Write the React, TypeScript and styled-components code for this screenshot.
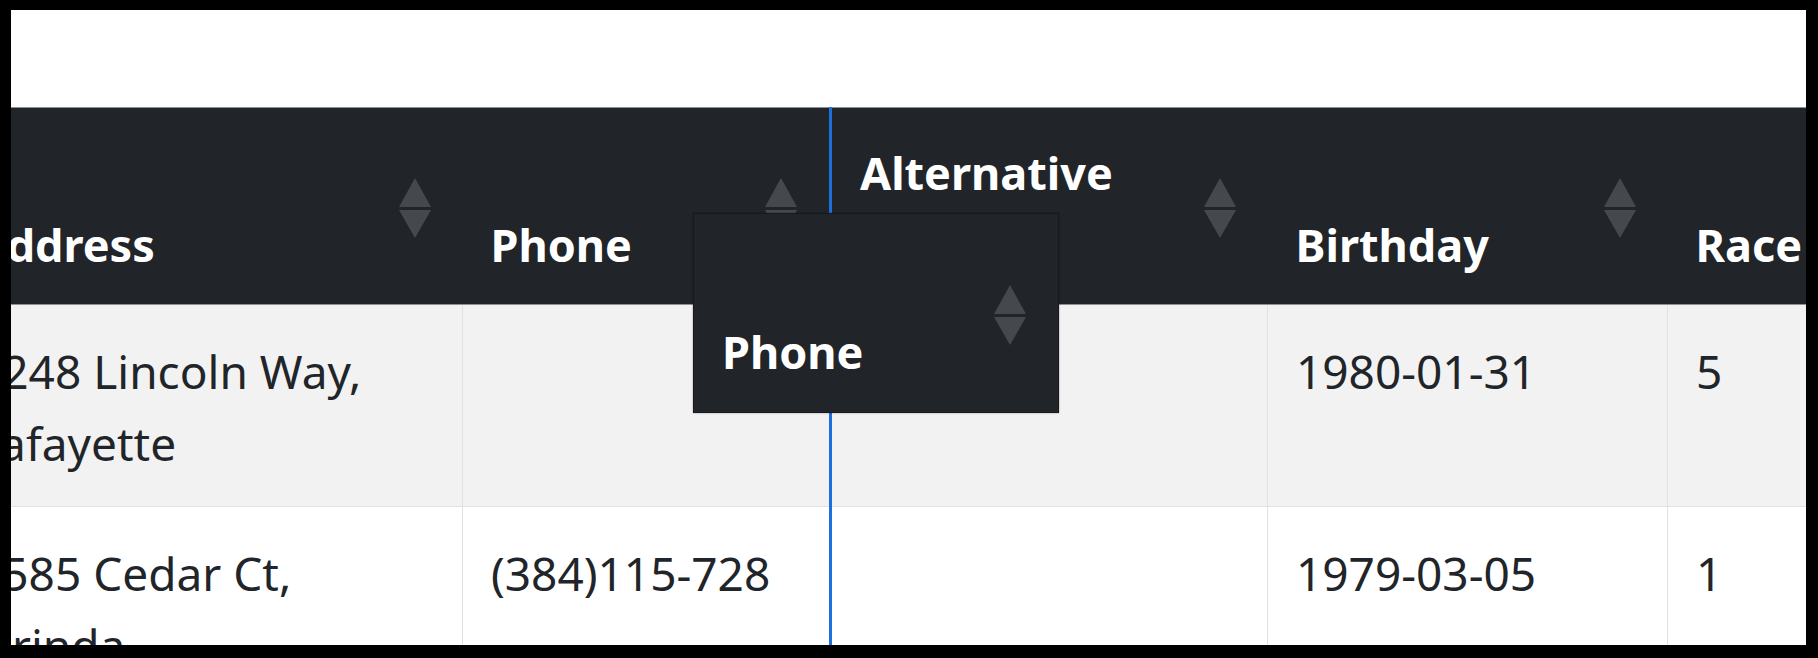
import { useLayoutEffect, useRef, FC } from 'react'
import styled, { createGlobalStyle } from 'styled-components'

interface Person {
  address: string
  phone: string
  altPhone: string
  birthday: string
  race: string
}

const people: Person[] = [
  {
    address: '1248 Lincoln Way, Lafayette',
    phone: '',
    altPhone: '',
    birthday: '1980-01-31',
    race: '5',
  },
  {
    address: '2585 Cedar Ct, Orinda',
    phone: '(384)115-728',
    altPhone: '',
    birthday: '1979-03-05',
    race: '1',
  },
]

const columns = [
  { key: 'address', title: 'Address', width: 515 },
  { key: 'phone', title: 'Phone', width: 368 },
  { key: 'altPhone', title: 'Alternative Phone', width: 437 },
  { key: 'birthday', title: 'Birthday', width: 400 },
  { key: 'race', title: 'Race', width: 260 },
] as const

// column the dragged header would be dropped before
const DROP_TARGET = 'altPhone'

const SortIcon: FC = () => (
  <SortMark viewBox="0 0 32 60" aria-hidden>
    <polygon points="16,0 32,29 0,29" />
    <polygon points="0,32 32,32 16,60" />
  </SortMark>
)

const App: FC = () => {
  const scrollRef = useRef<HTMLDivElement>(null)

  useLayoutEffect(() => {
    if (scrollRef.current) {
      scrollRef.current.scrollLeft = 64
    }
  }, [])

  return (
    <Frame>
      <GlobalStyle />
      <Viewport>
        <TopSpace />
        <TableScroll ref={scrollRef}>
          <Table>
            <colgroup>
              {columns.map((col) => (
                <col key={col.key} style={{ width: col.width }} />
              ))}
            </colgroup>
            <thead>
              <HeadRow>
                {columns.map((col) => (
                  <HeadCell key={col.key} $dropTarget={col.key === DROP_TARGET}>
                    {col.title}
                    <SortIcon />
                  </HeadCell>
                ))}
              </HeadRow>
            </thead>
            <tbody>
              {people.map((person, i) => (
                <Row key={i} $striped={i % 2 === 0}>
                  {columns.map((col) => (
                    <Cell key={col.key} $dropTarget={col.key === DROP_TARGET}>
                      {person[col.key]}
                    </Cell>
                  ))}
                </Row>
              ))}
            </tbody>
          </Table>
        </TableScroll>
        <DragGhost>
          Phone
          <SortIcon />
        </DragGhost>
      </Viewport>
    </Frame>
  )
}

export default App

const GlobalStyle = createGlobalStyle`
  html, body {
    margin: 0;
    padding: 0;
    background: #000;
  }
  body {
    font-family: 'Noto Sans', 'Open Sans', sans-serif;
  }
`

const Frame = styled.div`
  box-sizing: border-box;
  width: 1818px;
  height: 658px;
  padding: 10px 12px 13px 11px;
  background: #000;
`

const Viewport = styled.div`
  position: relative;
  display: flex;
  flex-direction: column;
  height: 100%;
  background: #fff;
  overflow: hidden;
`

const TopSpace = styled.div`
  flex: 0 0 97px;
`

const TableScroll = styled.div`
  flex: 1;
  overflow: hidden;
`

const Table = styled.table`
  table-layout: fixed;
  border-collapse: collapse;
  width: 1980px;
  color: #212529;
  font-size: 46px;
`

const HeadRow = styled.tr`
  background: #212529;
`

const HeadCell = styled.th<{ $dropTarget?: boolean }>`
  position: relative;
  padding: 29px 72px 23px 28px;
  background: #212529;
  color: #fff;
  font-size: 45px;
  font-weight: 700;
  line-height: 72px;
  text-align: left;
  vertical-align: bottom;
  border-top: 1px solid #8d9094;
  border-bottom: 1px solid #8d9094;
  border-right: none;
  border-left: ${({ $dropTarget }) =>
    $dropTarget ? '3px solid #1d6fdc' : 'none'};
`

const SortMark = styled.svg`
  position: absolute;
  right: 32px;
  top: calc(50% - 28px);
  width: 32px;
  height: 60px;
  fill: #45494d;
`

const Row = styled.tr<{ $striped?: boolean }>`
  background: ${({ $striped }) => ($striped ? '#f2f2f2' : '#fff')};
`

const Cell = styled.td<{ $dropTarget?: boolean }>`
  padding: 30px 28px 27px;
  line-height: 72px;
  vertical-align: top;
  border: 1px solid #dee2e6;
  border-left: ${({ $dropTarget }) =>
    $dropTarget ? '3px solid #1d6fdc' : '1px solid #dee2e6'};
`

const DragGhost = styled.div`
  position: absolute;
  left: 682px;
  top: 203px;
  box-sizing: border-box;
  width: 366px;
  height: 200px;
  display: flex;
  align-items: flex-end;
  padding: 0 72px 24px 28px;
  background: #212529;
  color: #fff;
  font-size: 45px;
  font-weight: 700;
  line-height: 72px;
  border: 1px solid rgba(0, 0, 0, 0.3);
  box-shadow: 0 0 2px rgba(0, 0, 0, 0.35);
`
